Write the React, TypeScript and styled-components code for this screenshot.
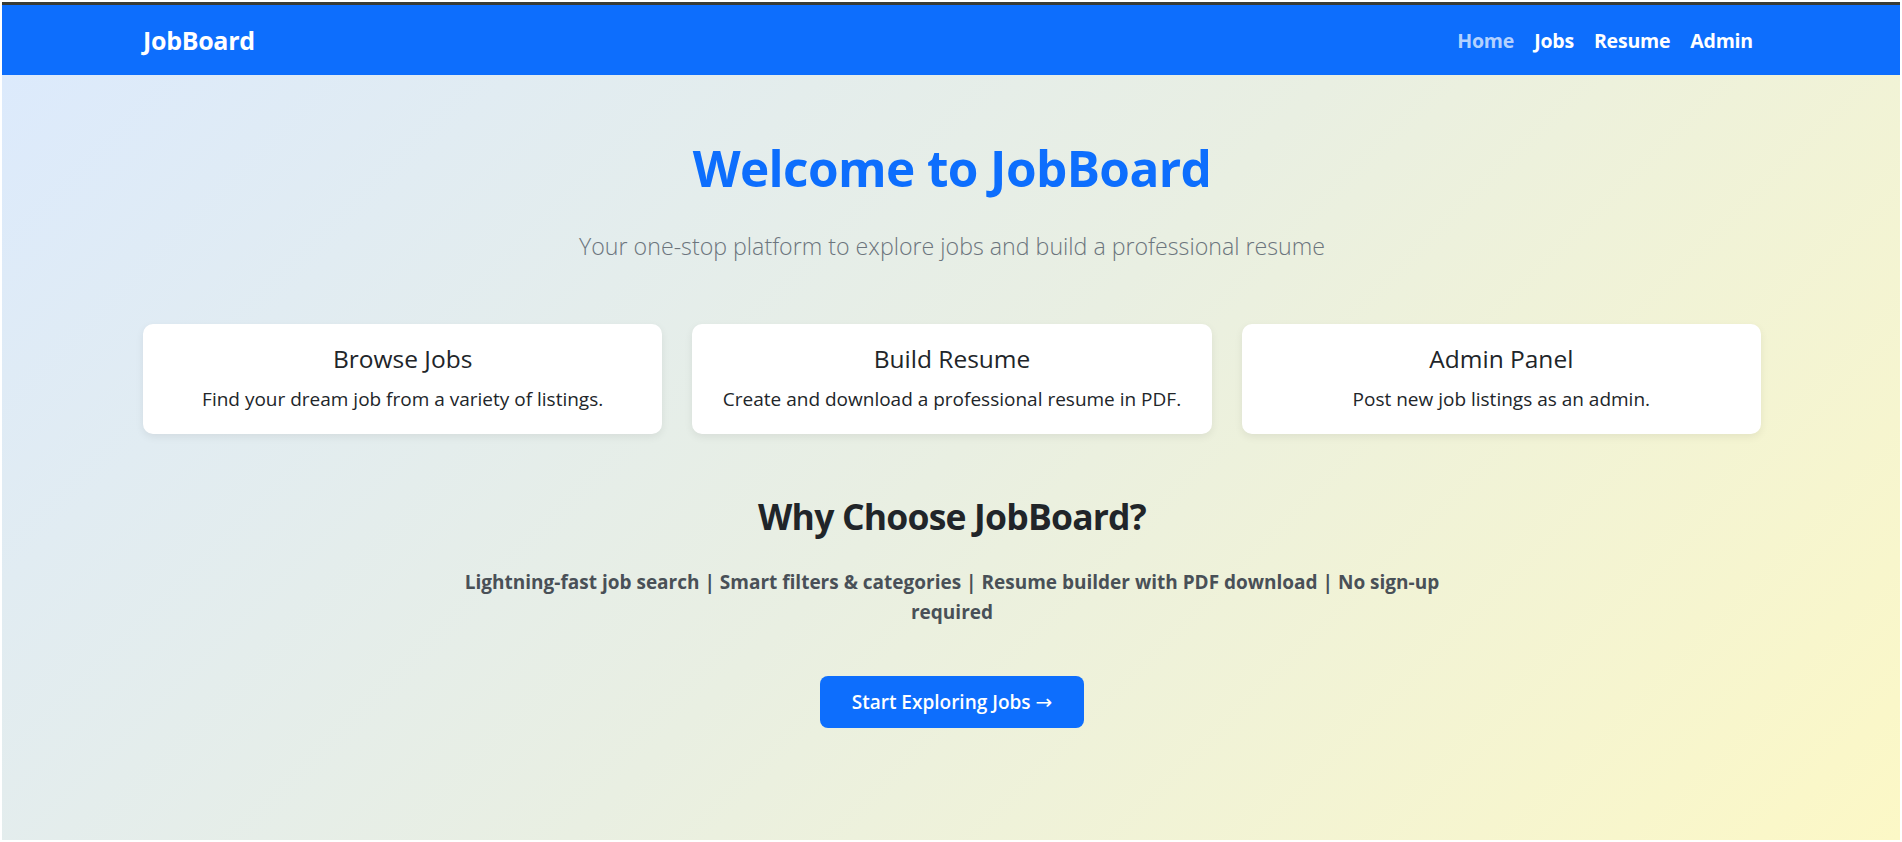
import styled, { createGlobalStyle } from 'styled-components';

const GlobalStyle = createGlobalStyle`
    * {
        box-sizing: border-box;
    }
    body {
        margin: 0;
        background: #ffffff;
        font-family: 'Open Sans', 'Noto Sans', sans-serif;
        color: #212529;
    }
`;

const features = [
    'Lightning-fast job search',
    'Smart filters & categories',
    'Resume builder with PDF download',
    'No sign-up required',
];

const cards = [
    { title: 'Browse Jobs', text: 'Find your dream job from a variety of listings.' },
    { title: 'Build Resume', text: 'Create and download a professional resume in PDF.' },
    { title: 'Admin Panel', text: 'Post new job listings as an admin.' },
];

const navLinks = ['Home', 'Jobs', 'Resume', 'Admin'];

export default function App() {
    return (
        <>
            <GlobalStyle />
            <Frame>
                {/* Top navigation */}
                <Navbar>
                    <NavInner>
                        <Brand>JobBoard</Brand>
                        <NavList>
                            {navLinks.map((link) => (
                                <NavLink key={link} $dim={link === 'Home'}>
                                    {link}
                                </NavLink>
                            ))}
                        </NavList>
                    </NavInner>
                </Navbar>

                {/* Hero */}
                <Main>
                    <Container>
                        <HeroTitle>Welcome to JobBoard</HeroTitle>
                        <Lead>Your one-stop platform to explore jobs and build a professional resume</Lead>

                        <CardRow>
                            {cards.map((card) => (
                                <Card key={card.title}>
                                    <CardTitle>{card.title}</CardTitle>
                                    <CardText>{card.text}</CardText>
                                </Card>
                            ))}
                        </CardRow>

                        {/* Why choose */}
                        <SectionTitle>Why Choose JobBoard?</SectionTitle>
                        <Features>{features.join(' | ')}</Features>

                        <CtaButton>
                            Start Exploring Jobs <Arrow>→</Arrow>
                        </CtaButton>
                    </Container>
                </Main>
            </Frame>
        </>
    );
}

const Frame = styled.div`
    margin: 2px;
    height: calc(100vh - 4px);
    border-top: 3px solid #383b35;
    display: flex;
    flex-direction: column;
`;

const Navbar = styled.nav`
    background: #0d6efd;
    height: 70px;
    flex-shrink: 0;
`;

const NavInner = styled.div`
    max-width: 1620px;
    height: 100%;
    margin: 0 auto;
    padding-left: 2px;
    display: flex;
    align-items: center;
    justify-content: space-between;
`;

const Brand = styled.div`
    color: #ffffff;
    font-size: 25px;
    font-weight: 700;
    letter-spacing: -0.3px;
`;

const NavList = styled.div`
    display: flex;
    align-items: center;
    margin-right: -2px;
`;

const NavLink = styled.a<{ $dim?: boolean }>`
    padding: 0 10px;
    font-size: 19.5px;
    font-weight: 700;
    letter-spacing: -0.2px;
    color: ${(p) => (p.$dim ? 'rgba(255, 255, 255, 0.7)' : '#ffffff')};
    cursor: pointer;
`;

const Main = styled.main`
    flex: 1;
    background: linear-gradient(135deg, #dceafc 0%, #e9efe2 50%, #fcf8c6 100%);
`;

const Container = styled.div`
    max-width: 1620px;
    margin: 0 auto;
    padding-top: 63px;
    padding-left: 2px;
    display: flex;
    flex-direction: column;
    align-items: center;
    text-align: center;
`;

const HeroTitle = styled.h1`
    margin: 0 0 30px;
    font-size: 49.5px;
    line-height: 60px;
    font-weight: 700;
    letter-spacing: -0.6px;
    color: #0d6efd;
`;

const Lead = styled.p`
    margin: 0 0 59px;
    font-size: 23.2px;
    line-height: 37px;
    font-weight: 300;
    color: #6c757d;
`;

const CardRow = styled.div`
    width: 100%;
    display: grid;
    grid-template-columns: repeat(3, 1fr);
    gap: 30px;
`;

const Card = styled.div`
    background: #ffffff;
    border-radius: 10px;
    padding: 20px;
    box-shadow: 0 3px 8px rgba(0, 0, 0, 0.07);
`;

const CardTitle = styled.h5`
    margin: 0 0 10px;
    font-size: 24.5px;
    line-height: 30px;
    font-weight: 500;
    color: #212529;
`;

const CardText = styled.p`
    margin: 0;
    font-size: 19px;
    line-height: 30px;
    color: #212529;
`;

const SectionTitle = styled.h2`
    margin: 58px 0 27px;
    font-size: 35.5px;
    line-height: 48px;
    font-weight: 700;
    letter-spacing: -0.8px;
    color: #212529;
`;

const Features = styled.p`
    margin: 0 0 49px;
    max-width: 1000px;
    font-size: 19px;
    line-height: 30px;
    font-weight: 700;
    color: #495057;
`;

const CtaButton = styled.button`
    height: 52px;
    padding: 0 32px;
    border: none;
    border-radius: 8px;
    background: #0d6efd;
    color: #ffffff;
    font-family: inherit;
    font-size: 19px;
    font-weight: 600;
    cursor: pointer;
`;

const Arrow = styled.span`
    font-family: 'DejaVu Sans', sans-serif;
    font-weight: 400;
    font-size: 20px;
`;
